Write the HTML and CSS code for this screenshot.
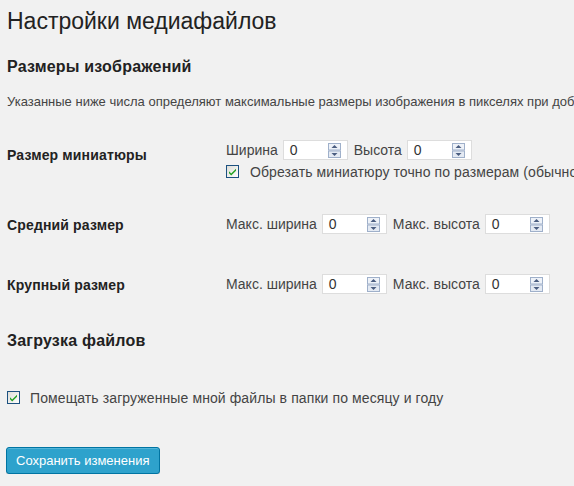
FILE: index.html
```html
<!DOCTYPE html>
<html lang="ru">
<head>
<meta charset="utf-8">
<title>Настройки медиафайлов</title>
<link rel="stylesheet" href="styles.css">
</head>
<body>
<div class="wrap">
  <h1 class="page-title">Настройки медиафайлов</h1>
  <h2 class="section-title">Размеры изображений</h2>
  <p class="desc">Указанные ниже числа определяют максимальные размеры изображения в пикселях при добавлении в библиотеку медиафайлов.</p>

  <div class="settings">
    <div class="row row-thumb">
      <div class="row-label">Размер миниатюры</div>
      <div class="row-controls">
        <div class="field-line">
          <span class="field-name">Ширина</span>
          <span class="num"><span class="num-val">0</span><svg class="spin" width="13" height="15" viewBox="0 0 13 15"><rect x="0.5" y="0.5" width="12" height="6.5" fill="#eef2f8" stroke="#9fb0ca"/><rect x="0.5" y="8" width="12" height="6.5" fill="#e4eaf3" stroke="#9fb0ca"/><path d="M3.5 5H9.5L6.5 2Z" fill="#4a5d80"/><path d="M3.5 10H9.5L6.5 13Z" fill="#4a5d80"/></svg></span>
          <span class="field-name after">Высота</span>
          <span class="num"><span class="num-val">0</span><svg class="spin" width="13" height="15" viewBox="0 0 13 15"><rect x="0.5" y="0.5" width="12" height="6.5" fill="#eef2f8" stroke="#9fb0ca"/><rect x="0.5" y="8" width="12" height="6.5" fill="#e4eaf3" stroke="#9fb0ca"/><path d="M3.5 5H9.5L6.5 2Z" fill="#4a5d80"/><path d="M3.5 10H9.5L6.5 13Z" fill="#4a5d80"/></svg></span>
        </div>
        <div class="check-line">
          <svg class="checkbox" width="13" height="13" viewBox="0 0 13 13"><defs><linearGradient id="cb1" x1="0" y1="0" x2="1" y2="1"><stop offset="0" stop-color="#dcdcd6"/><stop offset="1" stop-color="#ffffff"/></linearGradient></defs><rect x="0.5" y="0.5" width="12" height="12" fill="url(#cb1)" stroke="#1c5180"/><path d="M3 6.2L5.2 8.5L10 3.8V5.8L5.2 10.5L3 8.2Z" fill="#21a121"/></svg>
          <span>Обрезать миниатюру точно по размерам (обычно миниатюры пропорциональны)</span>
        </div>
      </div>
    </div>

    <div class="row row-medium">
      <div class="row-label">Средний размер</div>
      <div class="row-controls">
        <div class="field-line">
          <span class="field-name">Макс. ширина</span>
          <span class="num"><span class="num-val">0</span><svg class="spin" width="13" height="15" viewBox="0 0 13 15"><rect x="0.5" y="0.5" width="12" height="6.5" fill="#eef2f8" stroke="#9fb0ca"/><rect x="0.5" y="8" width="12" height="6.5" fill="#e4eaf3" stroke="#9fb0ca"/><path d="M3.5 5H9.5L6.5 2Z" fill="#4a5d80"/><path d="M3.5 10H9.5L6.5 13Z" fill="#4a5d80"/></svg></span>
          <span class="field-name after">Макс. высота</span>
          <span class="num"><span class="num-val">0</span><svg class="spin" width="13" height="15" viewBox="0 0 13 15"><rect x="0.5" y="0.5" width="12" height="6.5" fill="#eef2f8" stroke="#9fb0ca"/><rect x="0.5" y="8" width="12" height="6.5" fill="#e4eaf3" stroke="#9fb0ca"/><path d="M3.5 5H9.5L6.5 2Z" fill="#4a5d80"/><path d="M3.5 10H9.5L6.5 13Z" fill="#4a5d80"/></svg></span>
        </div>
      </div>
    </div>

    <div class="row row-large">
      <div class="row-label">Крупный размер</div>
      <div class="row-controls">
        <div class="field-line">
          <span class="field-name">Макс. ширина</span>
          <span class="num"><span class="num-val">0</span><svg class="spin" width="13" height="15" viewBox="0 0 13 15"><rect x="0.5" y="0.5" width="12" height="6.5" fill="#eef2f8" stroke="#9fb0ca"/><rect x="0.5" y="8" width="12" height="6.5" fill="#e4eaf3" stroke="#9fb0ca"/><path d="M3.5 5H9.5L6.5 2Z" fill="#4a5d80"/><path d="M3.5 10H9.5L6.5 13Z" fill="#4a5d80"/></svg></span>
          <span class="field-name after">Макс. высота</span>
          <span class="num"><span class="num-val">0</span><svg class="spin" width="13" height="15" viewBox="0 0 13 15"><rect x="0.5" y="0.5" width="12" height="6.5" fill="#eef2f8" stroke="#9fb0ca"/><rect x="0.5" y="8" width="12" height="6.5" fill="#e4eaf3" stroke="#9fb0ca"/><path d="M3.5 5H9.5L6.5 2Z" fill="#4a5d80"/><path d="M3.5 10H9.5L6.5 13Z" fill="#4a5d80"/></svg></span>
        </div>
      </div>
    </div>
  </div>

  <h2 class="section-title upload-title">Загрузка файлов</h2>
  <div class="check-line upload-check">
    <svg class="checkbox" width="13" height="13" viewBox="0 0 13 13"><defs><linearGradient id="cb2" x1="0" y1="0" x2="1" y2="1"><stop offset="0" stop-color="#dcdcd6"/><stop offset="1" stop-color="#ffffff"/></linearGradient></defs><rect x="0.5" y="0.5" width="12" height="12" fill="url(#cb2)" stroke="#1c5180"/><path d="M3 6.2L5.2 8.5L10 3.8V5.8L5.2 10.5L3 8.2Z" fill="#21a121"/></svg>
    <span>Помещать загруженные мной файлы в папки по месяцу и году</span>
  </div>

  <div class="actions">
    <button class="button-primary" type="button">Сохранить изменения</button>
  </div>
</div>
</body>
</html>
```

FILE: styles.css
```css
html, body {
  margin: 0;
  padding: 0;
  background: #f1f1f1;
}

body {
  font-family: "Liberation Sans", Arial, sans-serif;
  font-size: 13px;
  color: #444;
  overflow: hidden;
}

.wrap {
  padding: 7px 0 0 7px;
  white-space: nowrap;
}

.page-title {
  margin: 0;
  font-size: 23px;
  font-weight: 400;
  line-height: 29px;
  color: #222;
}

.section-title {
  margin: 21px 0 0;
  font-size: 16px;
  font-weight: 700;
  line-height: 20px;
  color: #222;
  letter-spacing: 0.2px;
}

.desc {
  margin: 16px 0 0;
  line-height: 18px;
}

.settings {
  margin-top: 29px;
  display: flex;
  flex-direction: column;
}

.row {
  display: flex;
}

.row-label {
  width: 219px;
  flex: none;
  font-size: 14px;
  font-weight: 700;
  color: #222;
  line-height: 16px;
  padding-top: 3px;
  letter-spacing: 0.15px;
}

.row-thumb .row-label {
  padding-top: 7px;
}

.row-medium {
  margin-top: 33px;
}

.row-large {
  margin-top: 40px;
}

.field-line {
  display: flex;
  align-items: center;
  gap: 5px;
  height: 20px;
  font-size: 14px;
}

.field-name.after {
  margin-left: 1px;
}

.num {
  box-sizing: border-box;
  width: 65px;
  height: 20px;
  border: 1px solid #dddddd;
  background: #fff;
  display: flex;
  align-items: center;
  justify-content: space-between;
  padding: 0 6px;
  color: #333;
}

.spin {
  display: block;
}

.check-line {
  display: flex;
  align-items: flex-start;
  gap: 11px;
  font-size: 14px;
  line-height: 18px;
  margin-top: 3px;
  letter-spacing: 0.1px;
}

.checkbox {
  display: block;
  flex: none;
  margin-top: 2px;
}

.upload-title {
  margin-top: 37px;
}

.upload-check {
  margin-top: 38px;
  gap: 10px;
}

.actions {
  margin-top: 40px;
}

.button-primary {
  margin-left: -1px;
  box-sizing: border-box;
  height: 27px;
  padding: 0 9px;
  font-family: "Liberation Sans", Arial, sans-serif;
  font-size: 13px;
  line-height: 25px;
  color: #fff;
  background: #2ea2cc;
  border: 1px solid #0074a2;
  border-radius: 3px;
  box-shadow: inset 0 1px 0 rgba(120, 200, 230, 0.5), 0 1px 0 rgba(0, 0, 0, 0.15);
  cursor: pointer;
}
```
